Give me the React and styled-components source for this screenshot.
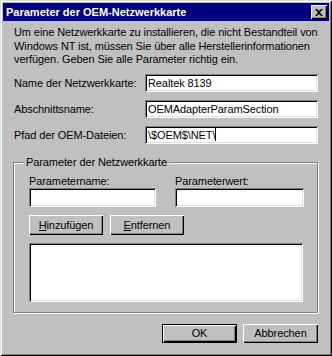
import React from 'react'
import styled, { createGlobalStyle } from 'styled-components'

const Global = createGlobalStyle`
  html, body {
    margin: 0;
    padding: 0;
    background: #c0c0c0;
  }
  body {
    font-family: "Liberation Sans", Arial, sans-serif;
    font-size: 11px;
    letter-spacing: -0.1px;
    color: #000;
  }
`

const Window = styled.div`
  width: 332px;
  height: 356px;
  box-sizing: border-box;
  background: #c0c0c0;
  display: flex;
  flex-direction: column;
  padding: 3px;
  box-shadow: inset 1px 1px 0 #dfdfdf, inset -1px -1px 0 #000,
    inset 2px 2px 0 #fff, inset -2px -2px 0 #808080;
`

const TitleBar = styled.div`
  height: 18px;
  background: #000080;
  display: flex;
  align-items: center;
  justify-content: space-between;
  padding: 0 2px 0 3px;
`

const TitleText = styled.span`
  color: #fff;
  font-weight: bold;
  font-size: 11px;
  letter-spacing: 0;
  white-space: nowrap;
`

const CloseButton = styled.div`
  width: 16px;
  height: 14px;
  box-sizing: border-box;
  background: #c0c0c0;
  display: flex;
  align-items: center;
  justify-content: center;
  box-shadow: inset 1px 1px 0 #fff, inset -1px -1px 0 #000,
    inset -2px -2px 0 #808080;
`

const Body = styled.div`
  flex: 1;
  display: flex;
  flex-direction: column;
  padding: 5px 11px 0 10px;
`

const Intro = styled.p`
  margin: 0 0 0 1px;
  line-height: 13.5px;
  white-space: nowrap;
`

const Rows = styled.div`
  display: flex;
  flex-direction: column;
  gap: 8px;
  margin-top: 7px;
`

const Row = styled.div`
  display: flex;
  align-items: center;
`

const Label = styled.label`
  width: 131px;
  padding-left: 1px;
  white-space: nowrap;
`

const Input = styled.div`
  flex: 1;
  height: 18px;
  box-sizing: border-box;
  background: #fff;
  padding: 2px 3px 0;
  line-height: 14px;
  white-space: nowrap;
  box-shadow: inset 1px 1px 0 #808080, inset -1px -1px 0 #fff,
    inset 2px 2px 0 #000, inset -2px -2px 0 #dfdfdf;
`

const FieldInput = styled(Input)`
  flex: none;
  height: 19px;
`

const Caret = styled.span`
  display: inline-block;
  width: 1px;
  height: 13px;
  background: #000;
  vertical-align: -2px;
`

const Group = styled.div`
  position: relative;
  margin-top: 18px;
  height: 151px;
  box-sizing: border-box;
  border: 1px solid #808080;
  box-shadow: inset 1px 1px 0 #fff, 1px 1px 0 #fff;
  padding: 12px 13px 0 15px;
  display: flex;
  flex-direction: column;
`

const Legend = styled.span`
  position: absolute;
  top: -7px;
  left: 10px;
  padding: 0 2px;
  background: #c0c0c0;
  line-height: 13px;
  white-space: nowrap;
`

const FieldPair = styled.div`
  display: flex;
  justify-content: space-between;
`

const Field = styled.div`
  display: flex;
  flex-direction: column;
  width: ${p => p.$width}px;
`

const FieldLabel = styled.span`
  line-height: 13px;
`

const ButtonRow = styled.div`
  display: flex;
  gap: ${p => p.$gap || 7}px;
  margin-top: ${p => p.$top || 8}px;
  justify-content: ${p => p.$end ? 'flex-end' : 'flex-start'};
`

const Button = styled.div`
  width: ${p => p.$width || 74}px;
  height: ${p => p.$height || 20}px;
  box-sizing: border-box;
  display: flex;
  align-items: center;
  justify-content: center;
  background: #c0c0c0;
  white-space: nowrap;
  box-shadow: ${p => p.$default
    ? 'inset 0 0 0 1px #000, inset 2px 2px 0 #fff, inset -2px -2px 0 #000, inset -3px -3px 0 #808080'
    : 'inset 1px 1px 0 #fff, inset -1px -1px 0 #000, inset -2px -2px 0 #808080'};
  u {
    text-decoration: underline;
  }
`

const ListBox = styled.div`
  margin-top: 8px;
  height: 59px;
  width: 274px;
  box-sizing: border-box;
  background: #fff;
  box-shadow: inset 1px 1px 0 #808080, inset -1px -1px 0 #fff,
    inset 2px 2px 0 #000, inset -2px -2px 0 #dfdfdf;
`

const CloseIcon = () => (
  <svg width="8" height="7" viewBox="0 0 8 7">
    <path d="M0 0h2l2 2 2-2h2L5 3.5 8 7H6L4 5 2 7H0l3-3.5z" fill="#000" />
  </svg>
)

const App = () => {
  return (
    <>
      <Global />
      <Window>
        <TitleBar>
          <TitleText>Parameter der OEM-Netzwerkkarte</TitleText>
          <CloseButton><CloseIcon /></CloseButton>
        </TitleBar>
        <Body>
          <Intro>
            Um eine Netzwerkkarte zu installieren, die nicht Bestandteil von<br />
            Windows NT ist, müssen Sie über alle Herstellerinformationen<br />
            verfügen. Geben Sie alle Parameter richtig ein.
          </Intro>
          <Rows>
            <Row>
              <Label>Name der Netzwerkkarte:</Label>
              <Input>Realtek 8139</Input>
            </Row>
            <Row>
              <Label>Abschnittsname:</Label>
              <Input>OEMAdapterParamSection</Input>
            </Row>
            <Row>
              <Label>Pfad der OEM-Dateien:</Label>
              <Input>\$OEM$\NET\<Caret /></Input>
            </Row>
          </Rows>
          <Group>
            <Legend>Parameter der Netzwerkkarte</Legend>
            <FieldPair>
              <Field $width={127}>
                <FieldLabel>Parametername:</FieldLabel>
                <FieldInput />
              </Field>
              <Field $width={129}>
                <FieldLabel>Parameterwert:</FieldLabel>
                <FieldInput />
              </Field>
            </FieldPair>
            <ButtonRow>
              <Button><span><u>H</u>inzufügen</span></Button>
              <Button><span><u>E</u>ntfernen</span></Button>
            </ButtonRow>
            <ListBox />
          </Group>
          <ButtonRow $end $gap={6} $top={11}>
            <Button $default $width={75} $height={19}>OK</Button>
            <Button $width={75} $height={19}>Abbrechen</Button>
          </ButtonRow>
        </Body>
      </Window>
    </>
  )
}

export default App
